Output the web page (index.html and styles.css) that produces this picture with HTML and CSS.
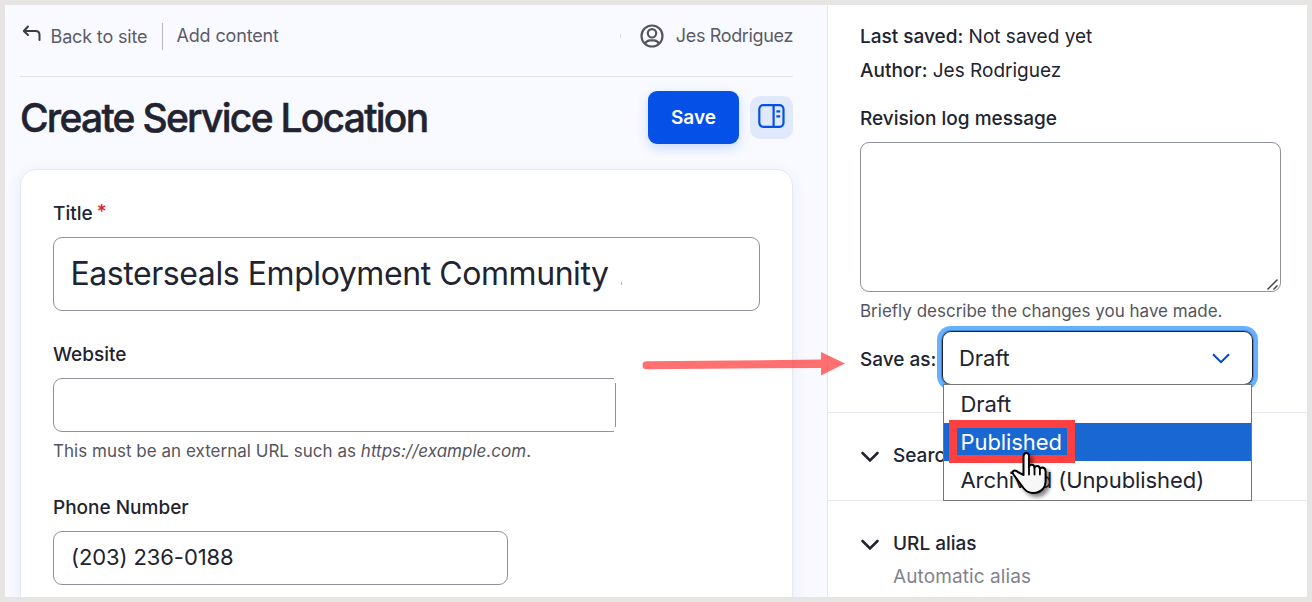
FILE: index.html
```html
<!DOCTYPE html>
<html lang="en">
  <head>
    <meta charset="UTF-8" />
    <meta name="viewport" content="width=device-width, initial-scale=1.0" />
    <title>Create Service Location</title>
    <link rel="stylesheet" href="styles.css">
  </head>
  <body>
    <main class="content">
      <header class="toolbar">
        <a class="back-link">
          <svg width="20" height="18" viewBox="0 0 20 18" fill="none" stroke="#3d3d49" stroke-width="2" stroke-linecap="round" stroke-linejoin="round">
            <path d="M6 1.500 1.800 6 6 10M2 6h11.500q4 0 4 4v5" />
          </svg>
          <span>Back to site</span>
        </a>
        <a class="add-link">Add content</a>
        <span class="tick"></span>
        <a class="user-link">
          <svg width="24" height="24" viewBox="0 0 24 24" fill="none" stroke="#55555f" stroke-width="2.2">
            <circle cx="12" cy="12" r="10.500" />
            <circle cx="12" cy="9.300" r="4.200" />
            <path d="M5 19.500Q7 16.400 10 16.400h4q3 0 5 3.100" />
          </svg>
          <span>Jes Rodriguez</span>
        </a>
      </header>

      <div class="title-row">
        <h1>Create Service Location</h1>
        <button type="submit" class="save">Save</button>
        <button type="button" class="panel-toggle" aria-label="Toggle sidebar">
          <svg width="27" height="24" viewBox="0 0 27 24" fill="none" stroke="#0550e6" stroke-width="2.2">
            <rect x="1.300" y="1.200" width="24.200" height="21.600" rx="4" />
            <path d="M15.600 1v22M18.400 7.400h3.800M18.400 12.400h3.800" />
          </svg>
        </button>
      </div>

      <form class="card">
        <label class="label" for="title">Title<span class="required">*</span></label>
        <div class="input input-title" id="title">Easterseals Employment Community<span class="dot"></span></div>

        <label class="label" for="website">Website</label>
        <div class="input input-url" id="website"></div>
        <p class="help help-url">This must be an external URL such as <em>https://example.com</em>.</p>

        <label class="label" for="phone">Phone Number</label>
        <div class="input input-phone" id="phone">(203) 236-0188</div>
      </form>
    </main>

    <aside class="sidebar">
      <section class="meta">
        <p class="info"><b>Last saved:</b> Not saved yet</p>
        <p class="info"><b>Author:</b> Jes Rodriguez</p>
        <label class="label label-revision" for="log">Revision log message</label>
        <div class="textarea" id="log">
          <svg width="14" height="14" viewBox="0 0 14 14" stroke="#444" stroke-width="1.500">
            <path d="M1.500 12.500 11.500 2.500M7.500 12.500l4-4" />
          </svg>
        </div>
        <p class="help">Briefly describe the changes you have made.</p>
        <div class="save-as">
          <span class="label">Save as:</span>
          <div class="select">
            <span>Draft</span>
            <svg width="18" height="11" viewBox="0 0 18 11" fill="none" stroke="#0047d3" stroke-width="2">
              <path d="M1 1.200 9 9.200l8-8" />
            </svg>
            <ul class="options">
              <li>Draft</li>
              <li class="selected">Published</li>
              <li>Archived (Unpublished)</li>
            </ul>
          </div>
        </div>
      </section>

      <section class="details">
        <svg width="20" height="12" viewBox="0 0 20 12" fill="none" stroke="#222330" stroke-width="2.600" stroke-linecap="round">
          <path d="M2.500 2 10 9.500 17.500 2" />
        </svg>
        <h2>Search</h2>
      </section>

      <section class="details">
        <svg width="20" height="12" viewBox="0 0 20 12" fill="none" stroke="#222330" stroke-width="2.600" stroke-linecap="round">
          <path d="M2.500 2 10 9.500 17.500 2" />
        </svg>
        <div>
          <h2>URL alias</h2>
          <p class="summary">Automatic alias</p>
        </div>
      </section>
    </aside>

    <!-- callouts over the form -->
    <svg class="arrow" width="206" height="26" viewBox="0 0 206 26">
      <path d="M4.500 10.300 179 8.600V1L203 12.600 179 24.500v-7.600L4.500 18.300a4 4 0 0 1 0-8z" fill="#ff4040" fill-opacity=".75" />
    </svg>
    <div class="highlight"></div>
    <svg class="cursor" width="48" height="52" viewBox="0 0 48 52">
      <path d="M15.500 25V6.500Q15.500 3 18.300 3T21 6.500V17q.5-2.200 2.800-2.200 2.500 0 2.700 3 .5-1.900 2.800-1.900 2.400 0 2.600 3 .6-1.500 2.700-1.500 3 .4 3 4V31q0 4.500-2.300 7.500Q31.500 43 25 43q-5.500 0-9.500-5L5.500 24.500Q3.500 21.500 6 20.700q2-.5 4.500 1.700z" fill="#f7f7f7" stroke="#000" stroke-width="2" stroke-linejoin="round" />
      <path d="M21 17v7.500M26.500 18v6.500M31.900 19v5.500" fill="none" stroke="#000" stroke-width="1.800" stroke-linecap="round" />
    </svg>
  </body>
</html>
```

FILE: styles.css
```css
* {
  box-sizing: border-box;
}

body {
  position: relative;
  display: grid;
  grid-template-columns: 822px 1fr;
  width: 1312px;
  height: 602px;
  margin: 0;
  border: 5px solid #e6e5e3;
  overflow: hidden;
  background: #fff;
  color: #222330;
  font-family: Inter, "Liberation Sans", sans-serif;
  font-size: 19px;
  line-height: 24px;
}

h1,
h2,
p,
ul {
  margin: 0;
  padding: 0;
}

button {
  border: none;
  font: inherit;
}

.content {
  height: 592px;
  padding: 0 34px 0 15px;
  overflow: hidden;
  background: #f9faff;
}

.toolbar {
  display: flex;
  align-items: center;
  height: 72px;
  padding-bottom: 9px;
  border-bottom: 1px solid #e1e2e7;
  color: #5b5b66;
  font-size: 18px;
  letter-spacing: -0.15px;
}

.back-link {
  display: flex;
  gap: 8.5px;
  height: 27px;
  padding: 2px 15px 0 2px;
  border-right: 1px solid #b7b8c0;
}

.add-link {
  padding-left: 13px;
}

.tick {
  width: 1px;
  height: 4px;
  margin-left: auto;
  background: #d9dae1;
}

.user-link {
  display: flex;
  gap: 12px;
  margin-left: 19px;
  letter-spacing: -0.35px;
}

.title-row {
  display: flex;
  align-items: center;
  height: 92px;
  padding-bottom: 11px;
}

h1 {
  flex: 1;
  font-size: 39px;
  font-weight: 500;
  line-height: 48px;
  letter-spacing: -1.73px;
  white-space: nowrap;
  -webkit-text-stroke: 0.5px #222330;
}

.save {
  width: 91px;
  height: 53px;
  border-radius: 9px;
  background: #0550e6;
  box-shadow: 0 4px 12px rgba(5, 80, 230, 0.2);
  color: #fff;
  font-weight: 600;
}

.panel-toggle {
  display: flex;
  align-items: center;
  justify-content: center;
  width: 43px;
  height: 43px;
  margin-left: 11px;
  padding: 0 0 3px;
  border-radius: 10px;
  background: #e0e8fc;
}

.card {
  height: 470px;
  padding: 32px 32px 0;
  border: 1px solid #e7e8ed;
  border-radius: 16px;
  background: #fff;
  box-shadow: 0 4px 16px rgba(40, 60, 160, 0.08);
}

.label {
  display: block;
  font-weight: 500;
}

.card .label {
  height: 24px;
}

.required {
  margin-left: 4px;
  color: #d72222;
  font-size: 19px;
  line-height: 19px;
  vertical-align: 2px;
}

.input {
  display: flex;
  align-items: center;
  height: 54px;
  margin-top: 11px;
  padding: 0 17px;
  border: 1px solid #8e929c;
  border-radius: 9px;
  background: #fff;
  font-size: 22px;
  letter-spacing: -0.1px;
}

.input-title {
  height: 74px;
  margin-bottom: 32px;
  padding-left: 16.5px;
  font-size: 32px;
  letter-spacing: -0.43px;
}

.dot {
  width: 1px;
  height: 3px;
  margin: 18px 0 0 12px;
  background: #e8a56c;
}

.input-url {
  position: relative;
  width: 563px;
  border-radius: 9px 3px 3px 9px;
}

/* right corners stay open */
.input-url::before,
.input-url::after {
  content: "";
  position: absolute;
  right: -1px;
  width: 2px;
  height: 5px;
  background: #fff;
}

.input-url::before {
  top: -1px;
}

.input-url::after {
  bottom: -1px;
}

.input-phone {
  width: 455px;
  padding-bottom: 2px;
}

.help {
  margin-top: 7px;
  color: #55555f;
  font-size: 17px;
}

.help-url {
  margin-bottom: 33px;
  letter-spacing: 0.02px;
}

.sidebar {
  height: 592px;
  border-left: 1px solid #e6e7ec;
}

.meta {
  height: 408px;
  padding: 15px 26px 0 32px;
  border-bottom: 1px solid #e6e7ec;
}

.info {
  line-height: 34px;
}

.info b {
  font-weight: 500;
}

.label-revision {
  margin-top: 19px;
}

.textarea {
  display: flex;
  align-items: flex-end;
  justify-content: flex-end;
  height: 150px;
  margin-top: 11px;
  border: 1px solid #8e929c;
  border-radius: 9px;
}

.save-as {
  display: flex;
  align-items: center;
  gap: 7px;
  margin-top: 8px;
}

.save-as .label {
  width: 75px;
  padding-top: 4px;
  white-space: nowrap;
}

.select {
  position: relative;
  display: flex;
  align-items: center;
  justify-content: space-between;
  width: 311px;
  height: 54px;
  padding: 0 22px 0 16px;
  border: 1px solid #222330;
  border-radius: 9px;
  box-shadow: 0 0 0 1px #3c86d6, 0 0 0 5px #66b0ff;
  font-size: 22px;
  letter-spacing: -0.08px;
}

.options {
  position: absolute;
  top: 52px;
  left: 0;
  width: 309px;
  height: 117px;
  border: 1px solid #767676;
  background: #fff;
  list-style: none;
}

.options li {
  height: 38px;
  padding-left: 16.5px;
  line-height: 39px;
}

.options .selected {
  background: #1967d2;
  color: #fff;
}

.details {
  display: flex;
  gap: 13px;
  height: 88px;
  padding: 31px 32px 0;
  border-bottom: 1px solid #e6e7ec;
}

.details:last-child {
  border-bottom: none;
}

.details svg {
  margin-top: 7px;
}

h2 {
  font-size: 19px;
  font-weight: 500;
}

.summary {
  margin-top: 9px;
  color: #82828c;
  letter-spacing: 0.1px;
}

.arrow {
  position: absolute;
  top: 346px;
  left: 637px;
}

.highlight {
  position: absolute;
  top: 415px;
  left: 944px;
  width: 126px;
  height: 43px;
  border: 8px solid #ff4040;
}

.cursor {
  position: absolute;
  top: 445px;
  left: 1003px;
  filter: drop-shadow(3px 3px 2px rgba(0, 0, 0, 0.5));
}
```
